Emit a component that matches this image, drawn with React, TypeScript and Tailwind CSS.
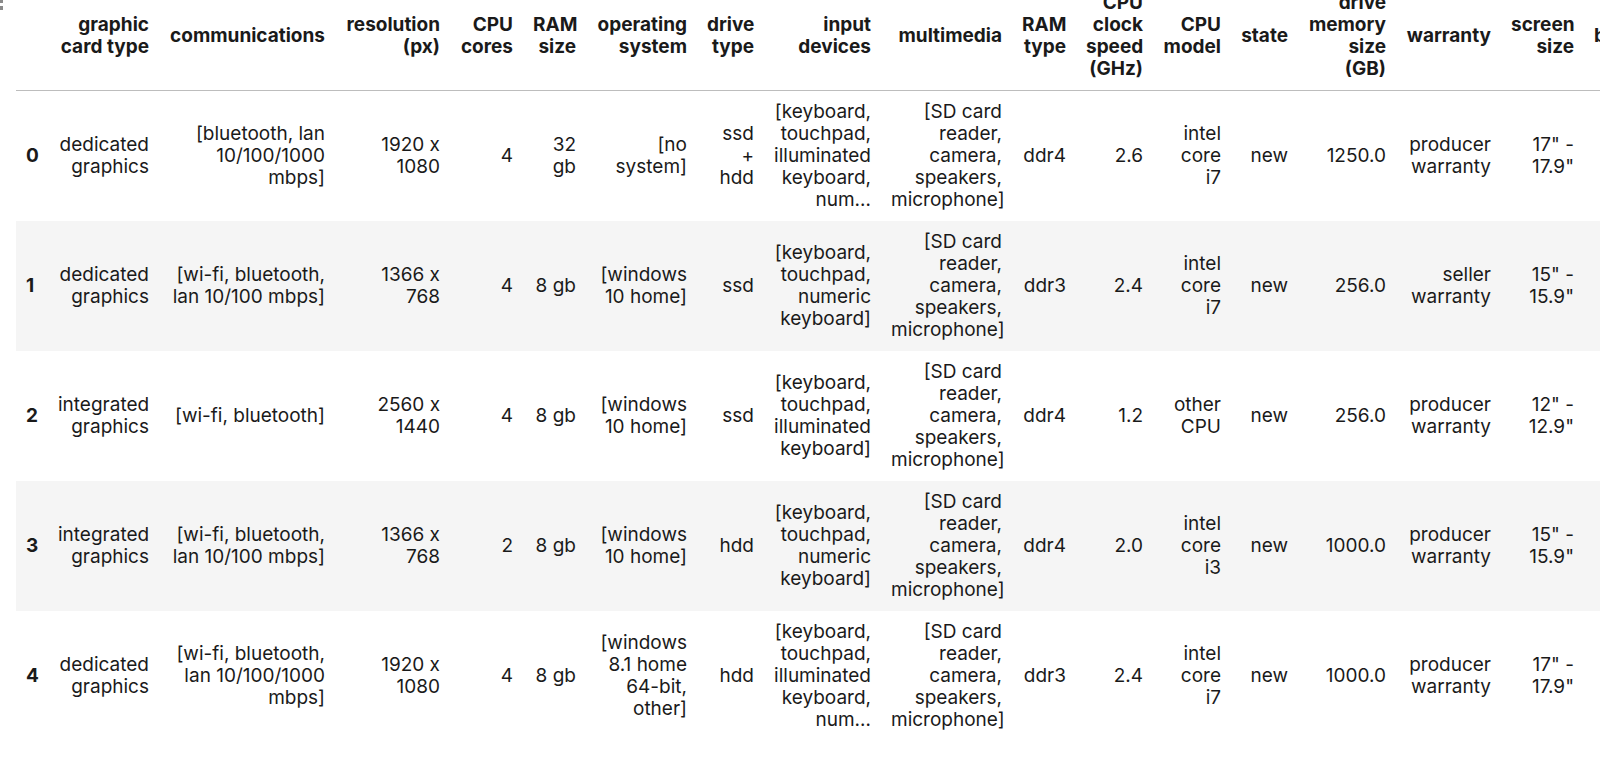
import React from 'react';

type Cell = string[];

const COLUMNS: { label: Cell; w: string }[] = [
    { label: ['graphic', 'card type'], w: 'w-[111px]' },
    { label: ['communications'], w: 'w-[176px]' },
    { label: ['resolution', '(px)'], w: 'w-[115px]' },
    { label: ['CPU', 'cores'], w: 'w-[73px]' },
    { label: ['RAM', 'size'], w: 'w-[63px]' },
    { label: ['operating', 'system'], w: 'w-[111px]' },
    { label: ['drive', 'type'], w: 'w-[67px]' },
    { label: ['input', 'devices'], w: 'w-[117px]' },
    { label: ['multimedia'], w: 'w-[131px]' },
    { label: ['RAM', 'type'], w: 'w-[64px]' },
    { label: ['CPU', 'clock', 'speed', '(GHz)'], w: 'w-[77px]' },
    { label: ['CPU', 'model'], w: 'w-[78px]' },
    { label: ['state'], w: 'w-[67px]' },
    { label: ['drive', 'memory', 'size', '(GB)'], w: 'w-[98px]' },
    { label: ['warranty'], w: 'w-[105px]' },
    { label: ['screen', 'size'], w: 'w-[83px]' },
];

const MEDIA: Cell = ['[SD card', 'reader,', 'camera,', 'speakers,', 'microphone]'];

const ROWS: Cell[][] = [
    [
        ['dedicated', 'graphics'], ['[bluetooth, lan', '10/100/1000', 'mbps]'], ['1920 x', '1080'], ['4'], ['32', 'gb'],
        ['[no', 'system]'], ['ssd', '+', 'hdd'], ['[keyboard,', 'touchpad,', 'illuminated', 'keyboard,', 'num…'], MEDIA,
        ['ddr4'], ['2.6'], ['intel', 'core', 'i7'], ['new'], ['1250.0'], ['producer', 'warranty'], ['17" -', '17.9"'],
    ],
    [
        ['dedicated', 'graphics'], ['[wi-fi, bluetooth,', 'lan 10/100 mbps]'], ['1366 x', '768'], ['4'], ['8 gb'],
        ['[windows', '10 home]'], ['ssd'], ['[keyboard,', 'touchpad,', 'numeric', 'keyboard]'], MEDIA,
        ['ddr3'], ['2.4'], ['intel', 'core', 'i7'], ['new'], ['256.0'], ['seller', 'warranty'], ['15" -', '15.9"'],
    ],
    [
        ['integrated', 'graphics'], ['[wi-fi, bluetooth]'], ['2560 x', '1440'], ['4'], ['8 gb'],
        ['[windows', '10 home]'], ['ssd'], ['[keyboard,', 'touchpad,', 'illuminated', 'keyboard]'], MEDIA,
        ['ddr4'], ['1.2'], ['other', 'CPU'], ['new'], ['256.0'], ['producer', 'warranty'], ['12" -', '12.9"'],
    ],
    [
        ['integrated', 'graphics'], ['[wi-fi, bluetooth,', 'lan 10/100 mbps]'], ['1366 x', '768'], ['2'], ['8 gb'],
        ['[windows', '10 home]'], ['hdd'], ['[keyboard,', 'touchpad,', 'numeric', 'keyboard]'], MEDIA,
        ['ddr4'], ['2.0'], ['intel', 'core', 'i3'], ['new'], ['1000.0'], ['producer', 'warranty'], ['15" -', '15.9"'],
    ],
    [
        ['dedicated', 'graphics'], ['[wi-fi, bluetooth,', 'lan 10/100/1000', 'mbps]'], ['1920 x', '1080'], ['4'], ['8 gb'],
        ['[windows', '8.1 home', '64-bit,', 'other]'], ['hdd'], ['[keyboard,', 'touchpad,', 'illuminated', 'keyboard,', 'num…'], MEDIA,
        ['ddr3'], ['2.4'], ['intel', 'core', 'i7'], ['new'], ['1000.0'], ['producer', 'warranty'], ['17" -', '17.9"'],
    ],
];

const Lines: React.FC<{ lines: Cell }> = ({ lines }) => (
    <>
        {lines.map((l, i) => (
            <React.Fragment key={i}>
                {i > 0 && <br />}
                {l}
            </React.Fragment>
        ))}
    </>
);

export default function App() {
    return (
        <div className="relative w-[1600px] h-[767px] overflow-hidden bg-white text-[#1a1a1a] font-['Inter','Liberation_Sans',sans-serif] text-[19px] leading-[22px]">
            {/* cell collapser dots */}
            <div className="absolute left-0 top-0 flex flex-col gap-[3px]">
                <span className="block w-[3px] h-[3px] bg-[#8a8a8a]" />
                <span className="block w-[3px] h-[4px] bg-[#8a8a8a]" />
            </div>

            <table className="table-fixed border-collapse w-[1718px] ml-4 -mt-[18px]">
                <thead className="border-b border-[#bdbdbd]">
                    <tr>
                        <th className="w-[32px] px-[10px] py-[10px]" />
                        {COLUMNS.map((c, i) => (
                            <th key={i} className={`${c.w} px-[10px] py-[10px] text-right align-middle font-bold whitespace-nowrap`}>
                                <Lines lines={c.label} />
                            </th>
                        ))}
                        <th className="w-[150px] px-[10px] py-[10px] text-left align-middle font-bold whitespace-nowrap">
                            battery
                        </th>
                    </tr>
                </thead>
                <tbody>
                    {ROWS.map((row, r) => (
                        <tr key={r} className={r % 2 === 1 ? 'bg-[#f5f5f5]' : 'bg-white'}>
                            <th className="px-[10px] py-[10px] text-left align-middle font-bold">{r}</th>
                            {row.map((cell, i) => (
                                <td key={i} className="px-[10px] py-[10px] text-right align-middle whitespace-nowrap">
                                    <Lines lines={cell} />
                                </td>
                            ))}
                            <td className="px-[10px] py-[10px]" />
                        </tr>
                    ))}
                </tbody>
            </table>
        </div>
    );
}
